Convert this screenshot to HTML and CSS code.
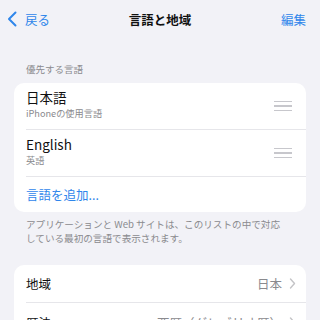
FILE: index.html
```html
<!DOCTYPE html>
<html lang="ja">
<head>
<meta charset="utf-8">
<link rel="stylesheet" href="styles.css">
</head>
<body>
<div class="screen">
  <header class="nav">
    <div class="back">
      <svg class="chev" width="10" height="16" viewBox="0 0 10 16"><path d="M8.5 1.5 L2 8 L8.5 14.5" fill="none" stroke="#2f86eb" stroke-width="2" stroke-linecap="round" stroke-linejoin="round"/></svg>
      <span>戻る</span>
    </div>
    <div class="title">言語と地域</div>
    <div class="edit">編集</div>
  </header>

  <div class="section-head">優先する言語</div>
  <div class="card">
    <div class="row lang">
      <div class="texts">
        <div class="main">日本語</div>
        <div class="sub">iPhoneの使用言語</div>
      </div>
      <div class="handle"><i></i><i></i><i></i></div>
    </div>
    <div class="row lang">
      <div class="texts">
        <div class="main">English</div>
        <div class="sub">英語</div>
      </div>
      <div class="handle"><i></i><i></i><i></i></div>
    </div>
    <div class="row add">言語を追加...</div>
  </div>
  <p class="footnote">アプリケーションと Web サイトは、このリストの中で対応<br>している最初の言語で表示されます。</p>

  <div class="card card2">
    <div class="row setting">
      <span class="label">地域</span>
      <span class="value">日本<svg class="disc" width="7" height="11" viewBox="0 0 7 11"><path d="M1.5 1 L5.5 5.5 L1.5 10" fill="none" stroke="#c4c4c7" stroke-width="1.4" stroke-linecap="round" stroke-linejoin="round"/></svg></span>
    </div>
    <div class="row setting">
      <span class="label">暦法</span>
      <span class="value">西暦（グレゴリオ暦）<svg class="disc" width="7" height="11" viewBox="0 0 7 11"><path d="M1.5 1 L5.5 5.5 L1.5 10" fill="none" stroke="#c4c4c7" stroke-width="1.4" stroke-linecap="round" stroke-linejoin="round"/></svg></span>
    </div>
  </div>
</div>
</body>
</html>
```

FILE: styles.css
```css
* { box-sizing: border-box; }
html, body { margin: 0; padding: 0; }
body {
  background: #f2f2f7;
  font-family: "Noto Sans CJK JP", "Noto Sans", sans-serif;
  color: #111;
  width: 320px;
  height: 320px;
  overflow: hidden;
}
.screen { width: 320px; }
.nav {
  height: 38px;
  display: flex;
  align-items: center;
  justify-content: space-between;
  padding: 0 14px 0 7px;
  position: relative;
}
.back {
  display: flex;
  align-items: center;
  gap: 8px;
  color: #2f86eb;
  font-size: 12.5px;
}
.chev { display: block; }
.title {
  position: absolute;
  left: 0; right: 0;
  text-align: center;
  font-size: 12.5px;
  font-weight: 700;
  pointer-events: none;
}
.edit { color: #2f86eb; font-size: 12.5px; }

.section-head {
  margin-top: 24px;
  padding-left: 26px;
  font-size: 9.5px;
  line-height: 14px;
  color: #8a8a8e;
}
.card {
  margin: 7px 14px 0 14px;
  background: #fff;
  border-radius: 10px;
  overflow: hidden;
}
.row {
  margin-left: 12px;
  padding-right: 14px;
  display: flex;
  align-items: center;
  justify-content: space-between;
  border-bottom: 1px solid #e6e6ea;
}
.row:last-child { border-bottom: none; }
.lang { height: 47px; }
.texts { display: flex; flex-direction: column; align-self: flex-start; padding-top: 6px; }
.main { font-size: 13.5px; line-height: 17px; color: #111; }
.sub { font-size: 9.2px; line-height: 13px; color: #8a8a8e; margin-top: 1px; }
.handle { display: flex; flex-direction: column; gap: 3.3px; width: 18px; }
.handle i { display: block; height: 1.2px; background: #c7c7cc; }
.add {
  height: 35px;
  color: #2f86eb;
  font-size: 12.5px;
}
.footnote {
  margin: 6px 0 0 0;
  padding: 0 14px 0 26px;
  font-size: 9.6px;
  line-height: 13.5px;
  color: #8a8a8e;
  white-space: nowrap;
}
.card2 { margin-top: 20px; }
.setting { height: 38px; padding-right: 10px; font-size: 12.5px; }
.label { color: #111; }
.value { color: #8a8a8e; display: flex; align-items: center; gap: 7px; }
.disc { display: block; }
```
